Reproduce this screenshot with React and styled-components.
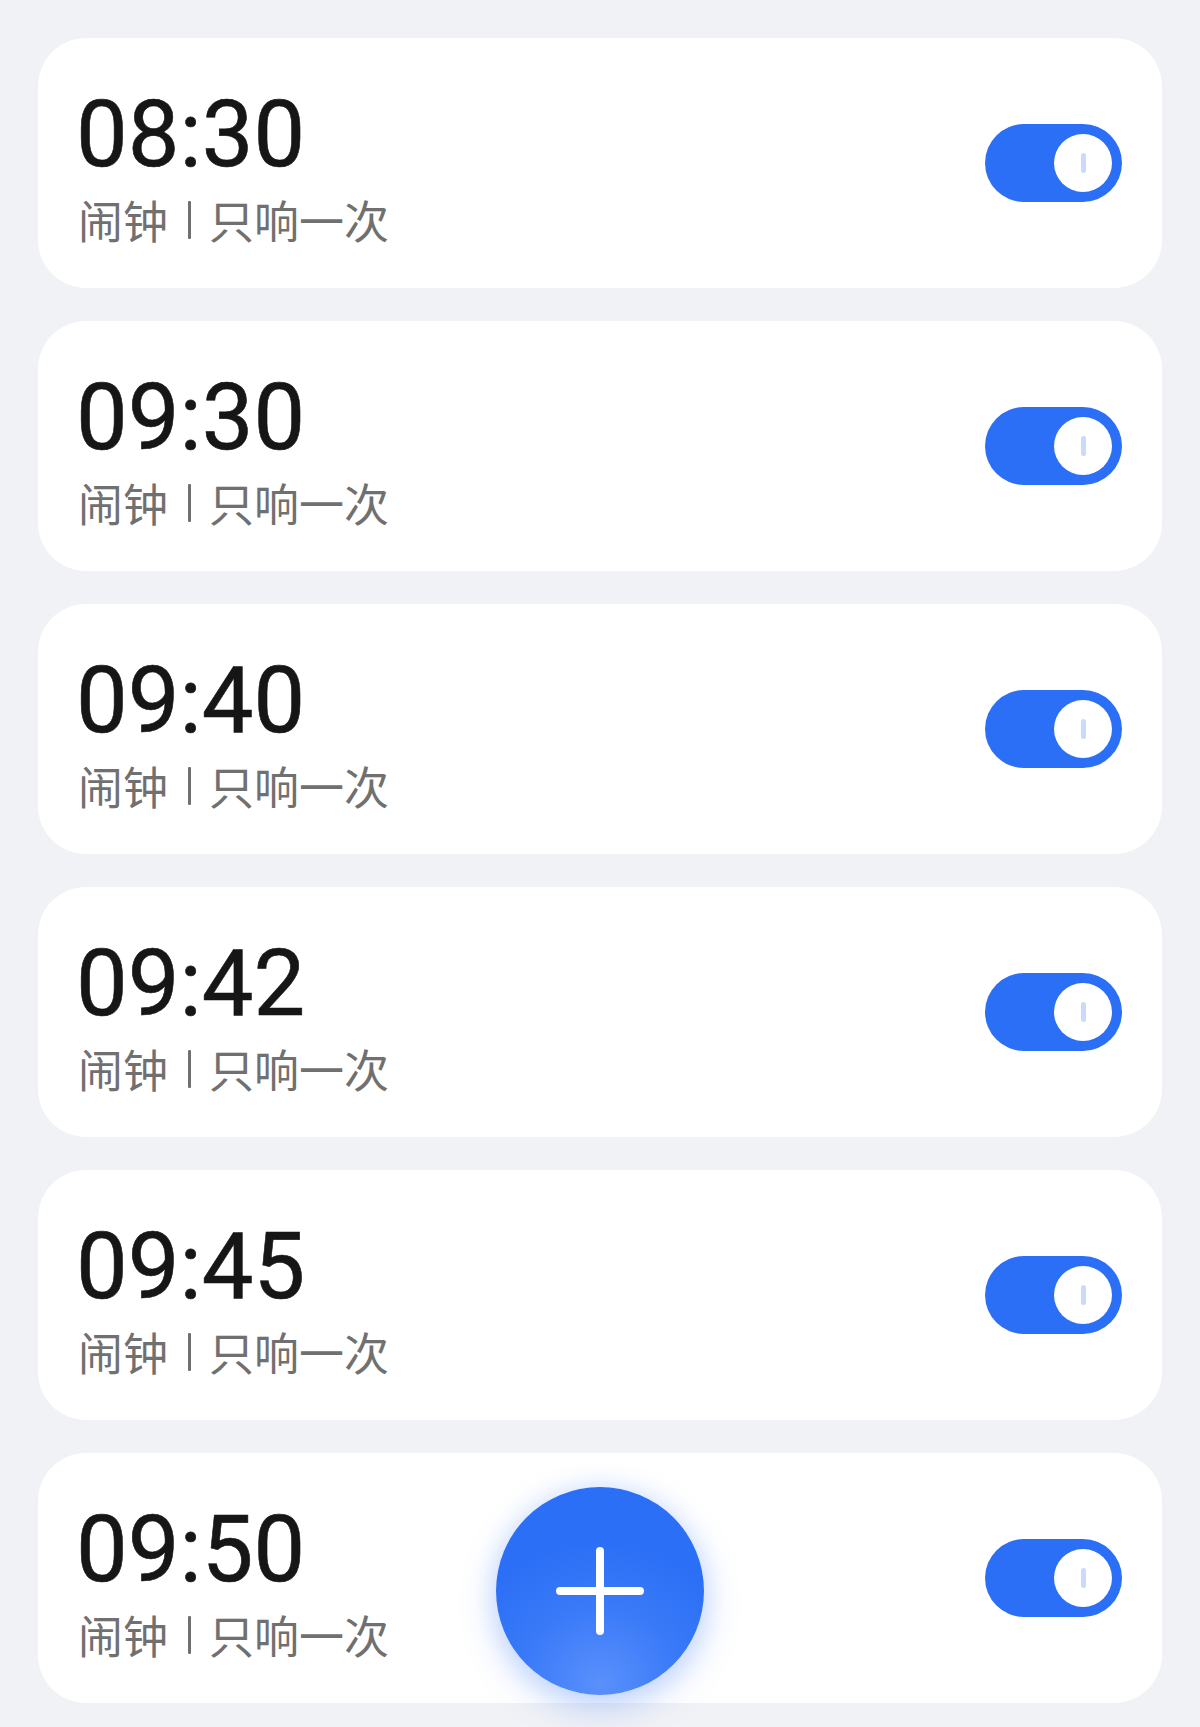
import React from "react";
import styled, { createGlobalStyle } from "styled-components";

const Global = createGlobalStyle`
  html, body { margin: 0; padding: 0; background: #f1f2f6; }
  body { font-family: Roboto, "Noto Sans CJK SC", sans-serif; }
`;

const Page = styled.div`
  position: relative;
  min-height: 1727px;
  box-sizing: border-box;
  padding: 38px 38px 24px;
  display: flex;
  flex-direction: column;
  gap: 33px;
`;

const Card = styled.div`
  height: 250px;
  box-sizing: border-box;
  background: #ffffff;
  border-radius: 48px;
  padding: 0 40px 0 38px;
  display: flex;
  align-items: center;
  justify-content: space-between;
`;

const Info = styled.div`
  display: flex;
  flex-direction: column;
  padding-top: 6px;
`;

const Time = styled.div`
  font-family: Roboto, sans-serif;
  font-size: 92px;
  font-weight: 400;
  line-height: 92px;
  color: #161616;
  white-space: nowrap;
  -webkit-text-stroke: 0.6px #161616;
`;

const Sub = styled.div`
  display: flex;
  align-items: center;
  font-family: "Noto Sans CJK SC", sans-serif;
  font-size: 45px;
  line-height: 48px;
  margin-top: 15px;
  margin-left: 2px;
  color: #707070;
  white-space: nowrap;
`;

const Sep = styled.span`
  display: inline-block;
  width: 3px;
  height: 38px;
  margin: 0 18px 0 20px;
  background: #707070;
  border-radius: 1px;
`;

const Toggle = styled.div`
  position: relative;
  width: 137px;
  height: 78px;
  border-radius: 39px;
  background: ${(p) => (p.$on ? "#2b6ff6" : "#d4d6dc")};
  flex-shrink: 0;
`;

const Knob = styled.div`
  position: absolute;
  top: 10px;
  right: 10px;
  width: 58px;
  height: 58px;
  border-radius: 50%;
  background: #ffffff;
  display: flex;
  align-items: center;
  justify-content: center;
`;

const Tick = styled.div`
  width: 5px;
  height: 20px;
  border-radius: 3px;
  background: #cbdafb;
`;

const Fab = styled.button`
  position: absolute;
  left: 50%;
  bottom: 32px;
  transform: translateX(-50%);
  width: 208px;
  height: 208px;
  border: none;
  border-radius: 50%;
  padding: 0;
  background: radial-gradient(circle at 50% 95%, #5a90fb 0%, #3a7af8 35%, #2b6ff6 65%);
  box-shadow: 0 12px 36px rgba(43, 111, 246, 0.28), 0 0 24px rgba(43, 111, 246, 0.12);
  display: flex;
  align-items: center;
  justify-content: center;
`;

const alarms = ["08:30", "09:30", "09:40", "09:42", "09:45", "09:50"];

export default function App() {
  return (
    <>
      <Global />
      <Page>
        {alarms.map((t) => (
          <Card key={t}>
            <Info>
              <Time>{t}</Time>
              <Sub>
                闹钟
                <Sep />
                只响一次
              </Sub>
            </Info>
            <Toggle $on>
              <Knob>
                <Tick />
              </Knob>
            </Toggle>
          </Card>
        ))}
        <Fab aria-label="添加闹钟">
          <svg width="88" height="88" viewBox="0 0 88 88">
            <path d="M44 4 V84 M4 44 H84" stroke="#ffffff" strokeWidth="8" strokeLinecap="round" />
          </svg>
        </Fab>
      </Page>
    </>
  );
}
